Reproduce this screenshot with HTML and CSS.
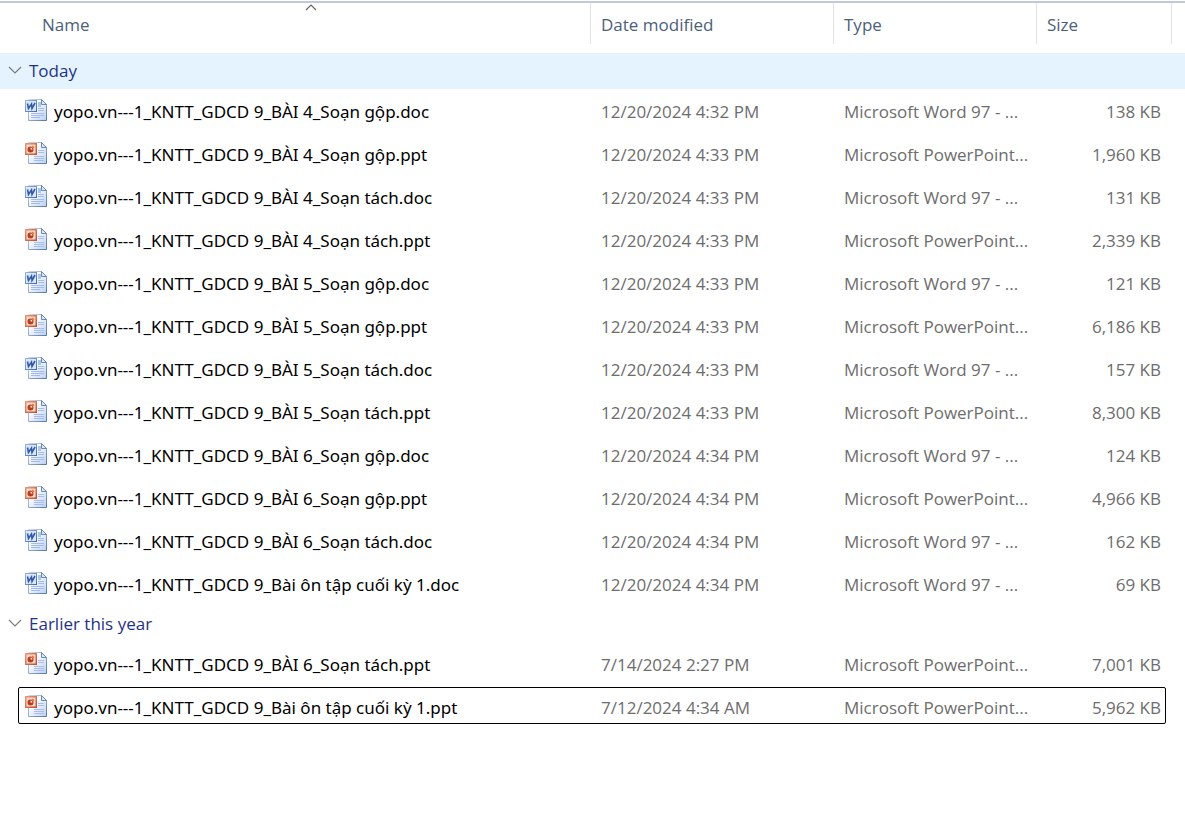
FILE: index.html
```html
<!DOCTYPE html>
<html lang="en">
<head>
<meta charset="utf-8">
<title>Files</title>
<meta name="viewport" content="width=device-width, initial-scale=1">
<link rel="stylesheet" href="styles.css">
</head>
<body>
<svg class="defs" width="0" height="0" aria-hidden="true">
  <defs>
    <linearGradient id="page" x1="0" y1="0" x2="1" y2="1"><stop offset="0.3" stop-color="#ffffff"/><stop offset="1" stop-color="#b9d0f5"/></linearGradient>
    <linearGradient id="edge" x1="0" y1="0" x2="1" y2="1"><stop offset="0" stop-color="#d3dbe6"/><stop offset="1" stop-color="#5578a8"/></linearGradient>
    <linearGradient id="blue" x1="0" y1="0" x2="1" y2="1"><stop offset="0" stop-color="#9db9ea"/><stop offset="1" stop-color="#3a64b8"/></linearGradient>
    <linearGradient id="red" x1="0" y1="0" x2="1" y2="1"><stop offset="0" stop-color="#ee9a78"/><stop offset="1" stop-color="#c24c28"/></linearGradient>
  </defs>
  <symbol id="sheet" viewBox="0 0 24 24">
    <path d="M4.500 1.500H17.500L22.500 6.500V22.500H4.500Z" fill="url(#page)" stroke="url(#edge)"/>
    <path d="M17.500 1.500V6.500H22.500Z" fill="#dce9fb" stroke="#6688b3"/>
  </symbol>
  <symbol id="doc" viewBox="0 0 24 24">
    <use href="#sheet" width="24" height="24"/>
    <path d="M14 10.500h6M14 12.500h6M7 15.500h13M7 17.500h13M7 19.500h9" stroke="#a3bbe6"/>
    <path d="M14 4h3v5h-3z" fill="#a9c6ee"/>
    <path d="M1 2h12v12H1z" fill="url(#blue)"/>
    <path d="M2 3h10v10h-10z" fill="#dbe7fb"/>
    <path d="M3.500 5.500L4.500 10.500L7.500 6L8 10.500L11 5" fill="none" stroke="#3159ae" stroke-width="1.600"/>
  </symbol>
  <symbol id="ppt" viewBox="0 0 24 24">
    <use href="#sheet" width="24" height="24"/>
    <path d="M14 9.500h6M14 11.500h6M10 15.500h10M10 17.500h10M10 19.500h10" stroke="#a9bde8"/>
    <path d="M1 2h12v12H1z" fill="url(#red)"/>
    <path d="M2.500 3.500h9v9h-9z" fill="#f9dccd"/>
    <circle cx="6.500" cy="8.500" r="3" fill="#b93b1b"/>
    <path d="M6.500 8.500V6.500A2 2 0 0 1 8.500 8.500Z" fill="#fff0e5"/>
    <path d="M8 4.500A3 3 0 0 1 10.500 7H8Z" fill="#e47849"/>
  </symbol>
  <symbol id="down" viewBox="0 0 14 8"><path d="M1 1L7 7L13 1" fill="none" stroke="#7b7b7b" stroke-width="1.200"/></symbol>
</svg>
<main>
<table class="files">
  <colgroup><col><col class="col-date"><col class="col-type"><col class="col-size"><col class="col-end"></colgroup>
  <thead>
    <tr>
      <th class="first" aria-sort="ascending"><button class="sort">Name<svg class="asc" viewBox="0 0 12 7" aria-hidden="true"><path d="M1 6L6 1L11 6" fill="none" stroke="#666" stroke-width="1.200"/></svg></button></th>
      <th><button class="sort">Date modified</button></th>
      <th><button class="sort">Type</button></th>
      <th><button class="sort">Size</button></th>
      <td></td>
    </tr>
  </thead>
  <tbody>
    <tr class="group hot"><th colspan="5"><button class="toggle" aria-expanded="true"><svg class="chev" aria-hidden="true"><use href="#down"/></svg>Today</button></th></tr>
    <tr class="file"><td><a href="#"><svg class="ico" aria-hidden="true"><use href="#doc"/></svg>yopo.vn---1_KNTT_GDCD 9_BÀI 4_Soạn gộp.doc</a></td><td>12/20/2024 4:32 PM</td><td>Microsoft Word 97 - ...</td><td>138 KB</td><td></td></tr>
    <tr class="file"><td><a href="#"><svg class="ico" aria-hidden="true"><use href="#ppt"/></svg>yopo.vn---1_KNTT_GDCD 9_BÀI 4_Soạn gộp.ppt</a></td><td>12/20/2024 4:33 PM</td><td>Microsoft PowerPoint...</td><td>1,960 KB</td><td></td></tr>
    <tr class="file"><td><a href="#"><svg class="ico" aria-hidden="true"><use href="#doc"/></svg>yopo.vn---1_KNTT_GDCD 9_BÀI 4_Soạn tách.doc</a></td><td>12/20/2024 4:33 PM</td><td>Microsoft Word 97 - ...</td><td>131 KB</td><td></td></tr>
    <tr class="file"><td><a href="#"><svg class="ico" aria-hidden="true"><use href="#ppt"/></svg>yopo.vn---1_KNTT_GDCD 9_BÀI 4_Soạn tách.ppt</a></td><td>12/20/2024 4:33 PM</td><td>Microsoft PowerPoint...</td><td>2,339 KB</td><td></td></tr>
    <tr class="file"><td><a href="#"><svg class="ico" aria-hidden="true"><use href="#doc"/></svg>yopo.vn---1_KNTT_GDCD 9_BÀI 5_Soạn gộp.doc</a></td><td>12/20/2024 4:33 PM</td><td>Microsoft Word 97 - ...</td><td>121 KB</td><td></td></tr>
    <tr class="file"><td><a href="#"><svg class="ico" aria-hidden="true"><use href="#ppt"/></svg>yopo.vn---1_KNTT_GDCD 9_BÀI 5_Soạn gộp.ppt</a></td><td>12/20/2024 4:33 PM</td><td>Microsoft PowerPoint...</td><td>6,186 KB</td><td></td></tr>
    <tr class="file"><td><a href="#"><svg class="ico" aria-hidden="true"><use href="#doc"/></svg>yopo.vn---1_KNTT_GDCD 9_BÀI 5_Soạn tách.doc</a></td><td>12/20/2024 4:33 PM</td><td>Microsoft Word 97 - ...</td><td>157 KB</td><td></td></tr>
    <tr class="file"><td><a href="#"><svg class="ico" aria-hidden="true"><use href="#ppt"/></svg>yopo.vn---1_KNTT_GDCD 9_BÀI 5_Soạn tách.ppt</a></td><td>12/20/2024 4:33 PM</td><td>Microsoft PowerPoint...</td><td>8,300 KB</td><td></td></tr>
    <tr class="file"><td><a href="#"><svg class="ico" aria-hidden="true"><use href="#doc"/></svg>yopo.vn---1_KNTT_GDCD 9_BÀI 6_Soạn gộp.doc</a></td><td>12/20/2024 4:34 PM</td><td>Microsoft Word 97 - ...</td><td>124 KB</td><td></td></tr>
    <tr class="file"><td><a href="#"><svg class="ico" aria-hidden="true"><use href="#ppt"/></svg>yopo.vn---1_KNTT_GDCD 9_BÀI 6_Soạn gộp.ppt</a></td><td>12/20/2024 4:34 PM</td><td>Microsoft PowerPoint...</td><td>4,966 KB</td><td></td></tr>
    <tr class="file"><td><a href="#"><svg class="ico" aria-hidden="true"><use href="#doc"/></svg>yopo.vn---1_KNTT_GDCD 9_BÀI 6_Soạn tách.doc</a></td><td>12/20/2024 4:34 PM</td><td>Microsoft Word 97 - ...</td><td>162 KB</td><td></td></tr>
    <tr class="file"><td><a href="#"><svg class="ico" aria-hidden="true"><use href="#doc"/></svg>yopo.vn---1_KNTT_GDCD 9_Bài ôn tập cuối kỳ 1.doc</a></td><td>12/20/2024 4:34 PM</td><td>Microsoft Word 97 - ...</td><td>69 KB</td><td></td></tr>
  </tbody>
  <tbody>
    <tr class="group next"><th colspan="5"><button class="toggle" aria-expanded="true"><svg class="chev" aria-hidden="true"><use href="#down"/></svg>Earlier this year</button></th></tr>
    <tr class="file"><td><a href="#"><svg class="ico" aria-hidden="true"><use href="#ppt"/></svg>yopo.vn---1_KNTT_GDCD 9_BÀI 6_Soạn tách.ppt</a></td><td>7/14/2024 2:27 PM</td><td>Microsoft PowerPoint...</td><td>7,001 KB</td><td></td></tr>
    <tr class="file focused"><td><a href="#"><svg class="ico" aria-hidden="true"><use href="#ppt"/></svg>yopo.vn---1_KNTT_GDCD 9_Bài ôn tập cuối kỳ 1.ppt</a></td><td>7/12/2024 4:34 AM</td><td>Microsoft PowerPoint...</td><td>5,962 KB</td><td></td></tr>
  </tbody>
</table>
</main>
</body>
</html>
```
FILE: styles.css
```css
* { box-sizing: border-box; }
body {
  margin: 0;
  background: #fff;
  font: 17px/24px "Open Sans", "Noto Sans", sans-serif;
  color: #6d6d6d;
}
.defs { position: absolute; }
main { padding-top: 1px; }
button { font: inherit; border: 0; background: none; text-align: left; }
.files {
  width: 100%;
  min-width: 1040px;
  table-layout: fixed;
  border-collapse: separate;
  border-spacing: 0;
  border-top: 2px solid #c3c8db;
}
.col-date { width: 243px; }
.col-type { width: 203px; }
.col-size { width: 135px; }
.col-end { width: 13px; }
th, td { padding: 0; text-align: left; font-weight: 400; white-space: nowrap; }
thead th { height: 50px; vertical-align: top; }
.sort {
  position: relative;
  display: block;
  width: 100%;
  height: 41px;
  padding: 2px 10px 0;
  border-right: 1px solid #e2e2e2;
  color: #4c607a;
}
.first .sort { padding-left: 42px; }
.asc { position: absolute; top: 1px; left: 305px; width: 12px; height: 7px; }
.group th { height: 36px; }
.group.next th { padding-top: 1px; height: 37px; }
.hot th { background: #e5f3ff; }
.toggle {
  display: flex;
  align-items: center;
  gap: 7px;
  width: 100%;
  height: 36px;
  padding: 0 8px;
  color: #1e3287;
}
.chev { width: 14px; height: 8px; margin-bottom: 3px; }
.file td { height: 43px; padding-left: 10px; padding-top: 2px; }
.file td:first-child { padding-left: 24px; }
.file td:nth-child(4) { padding-right: 11px; text-align: right; }
.file a {
  display: flex;
  align-items: center;
  gap: 6px;
  color: #000;
  font-family: "Noto Sans", "Open Sans", sans-serif;
  text-decoration: none;
}
.ico { flex: none; width: 24px; height: 24px; margin-bottom: 4px; }
.focused { position: relative; }
.focused td:first-child::after {
  content: "";
  position: absolute;
  inset: 2px 19px 4px 18px;
  border: 1px solid #000;
  border-radius: 2px;
  pointer-events: none;
}
```
